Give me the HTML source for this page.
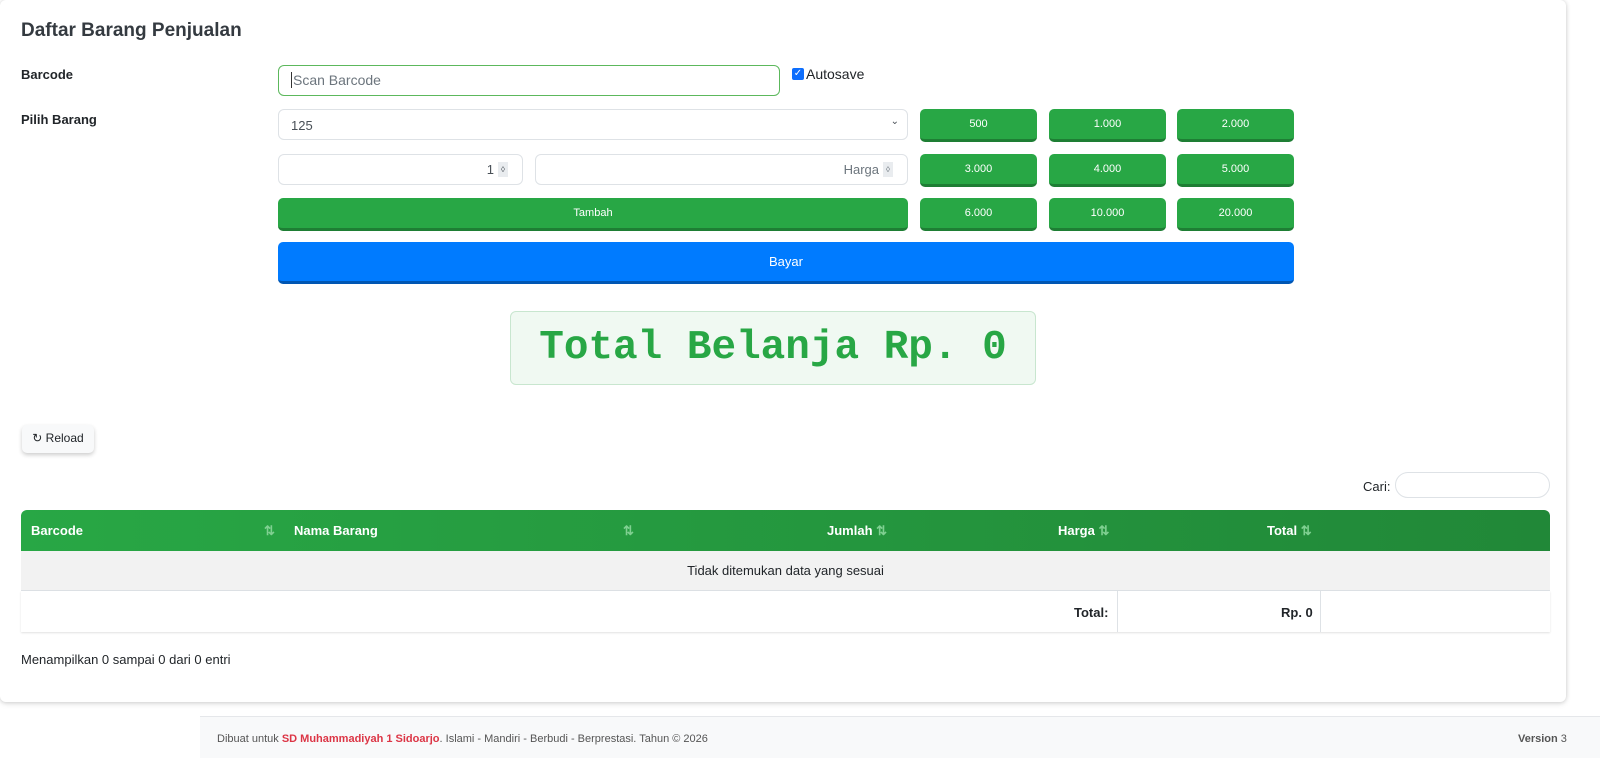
<!DOCTYPE html>
<html><head><meta charset="utf-8"><style>
*{box-sizing:border-box;margin:0;padding:0}
body{width:1600px;height:758px;background:#fff;font-family:"Liberation Sans",sans-serif;color:#212529;position:relative;overflow:hidden}
.card{position:absolute;left:0;top:0;width:1566px;height:702px;background:#fff;border-radius:6px;box-shadow:0 0 4px rgba(0,0,0,.15),0 2px 6px rgba(0,0,0,.1)}
.a{position:absolute}
h1{position:absolute;left:21px;top:20px;font-size:19px;font-weight:bold;color:#343a40}
.lbl{font-size:13px;font-weight:bold}
.inp{position:absolute;border:1px solid #dee2e6;border-radius:6px;background:#fff;font-size:13px;color:#495057}
.g{position:absolute;background:#28a745;border-bottom:3px solid #1e7e34;border-radius:5px;color:#fff;font-size:11px;text-align:center;line-height:30px;height:33px}
</style></head><body>
<div class="card">
<h1>Daftar Barang Penjualan</h1>
<div class="a lbl" style="left:21px;top:67px">Barcode</div>
<div class="a lbl" style="left:21px;top:112px">Pilih Barang</div>
<div class="inp" style="left:278px;top:65px;width:502px;height:31px;border-color:#5cb85c;padding:6px 12px;color:#6c757d;font-size:14px"><span style="border-left:1px solid #333;padding-left:1px">Scan Barcode</span></div>
<div class="a" style="left:792px;top:68px;width:12px;height:12px;background:#0d6efd;border-radius:2px;color:#fff;font-size:10px;line-height:12px;text-align:center">✓</div>
<div class="a" style="left:806px;top:66px;font-size:14px">Autosave</div>
<div class="inp" style="left:278px;top:109px;width:630px;height:31px;padding:8px 12px">125<span style="position:absolute;right:8px;top:6px;font-size:10px">⌄</span></div>
<div class="inp" style="left:278px;top:154px;width:245px;height:31px;text-align:right;padding:7px 28px 0 0">1<span style="position:absolute;right:14px;top:7px;width:10px;height:15px;background:#e9ecef;font-size:8px;line-height:15px;text-align:center">◊</span></div>
<div class="inp" style="left:535px;top:154px;width:373px;height:31px;text-align:right;padding:7px 28px 0 0;color:#6c757d">Harga<span style="position:absolute;right:14px;top:7px;width:10px;height:15px;background:#e9ecef;font-size:8px;line-height:15px;text-align:center">◊</span></div>
<div class="g" style="left:920px;top:109px;width:117px">500</div>
<div class="g" style="left:1049px;top:109px;width:117px">1.000</div>
<div class="g" style="left:1177px;top:109px;width:117px">2.000</div>
<div class="g" style="left:920px;top:154px;width:117px">3.000</div>
<div class="g" style="left:1049px;top:154px;width:117px">4.000</div>
<div class="g" style="left:1177px;top:154px;width:117px">5.000</div>
<div class="g" style="left:278px;top:198px;width:630px">Tambah</div>
<div class="g" style="left:920px;top:198px;width:117px">6.000</div>
<div class="g" style="left:1049px;top:198px;width:117px">10.000</div>
<div class="g" style="left:1177px;top:198px;width:117px">20.000</div>
<div class="a" style="left:278px;top:242px;width:1016px;height:42px;background:#007bff;border-bottom:3px solid #0056b3;border-radius:5px;color:#fff;font-size:13px;text-align:center;line-height:40px">Bayar</div>
<div class="a" style="left:510px;top:311px;width:526px;height:74px;background:#f0f9f2;border:1px solid #c8e6cf;border-radius:6px;color:#28a745;font-family:'Liberation Mono',monospace;font-weight:bold;font-size:41px;text-align:center;line-height:72px">Total Belanja Rp. 0</div>
<div class="a" style="left:22px;top:425px;width:72px;height:28px;background:#f8f9fa;border-radius:5px;box-shadow:0 2px 4px rgba(0,0,0,.2);font-size:12px;line-height:26px;text-align:center">&#x21bb; Reload</div>
<div class="a" style="left:1363px;top:479px;font-size:13px">Cari:</div>
<div class="a" style="left:1395px;top:472px;width:155px;height:26px;border:1px solid #dee2e6;border-radius:13px"></div>
<div class="a" style="left:21px;top:510px;width:1529px;height:41px;background:linear-gradient(90deg,#28a745,#218838);border-radius:6px 6px 0 0;color:#fff;font-weight:bold;font-size:13px">
<span class="a" style="left:10px;top:13px">Barcode</span><span class="a" style="left:243px;top:13px;color:#7fd091">⇅</span>
<span class="a" style="left:273px;top:13px">Nama Barang</span><span class="a" style="left:602px;top:13px;color:#7fd091">⇅</span>
<span class="a" style="left:806px;top:13px">Jumlah <span style="color:#7fd091">⇅</span></span>
<span class="a" style="left:1037px;top:13px">Harga <span style="color:#7fd091">⇅</span></span>
<span class="a" style="left:1246px;top:13px">Total <span style="color:#7fd091">⇅</span></span>
</div>
<div class="a" style="left:21px;top:551px;width:1529px;height:40px;background:#f2f2f2;border-bottom:1px solid #dee2e6;text-align:center;line-height:40px;font-size:13px">Tidak ditemukan data yang sesuai</div>
<div class="a" style="left:21px;top:591px;width:1529px;height:41px;box-shadow:0 1px 2px rgba(0,0,0,.12);font-weight:bold;font-size:13px">
<span class="a" style="left:1053px;top:14px">Total:</span>
<div class="a" style="left:1096px;top:0;width:1px;height:41px;background:#dee2e6"></div>
<span class="a" style="left:1260px;top:14px">Rp. 0</span>
<div class="a" style="left:1299px;top:0;width:1px;height:41px;background:#dee2e6"></div>
</div>
<div class="a" style="left:21px;top:652px;font-size:13px">Menampilkan 0 sampai 0 dari 0 entri</div>
</div>
<div class="a" style="left:200px;top:716px;width:1400px;height:42px;background:#f8f9fa;border-top:1px solid #e5e7ea;font-size:11px;color:#555">
<span class="a" style="left:17px;top:16px">Dibuat untuk <b style="color:#dc3545">SD Muhammadiyah 1 Sidoarjo</b>. Islami - Mandiri - Berbudi - Berprestasi. Tahun © 2026</span>
<span class="a" style="left:1318px;top:16px"><b>Version</b> 3</span>
</div>
</body></html>
